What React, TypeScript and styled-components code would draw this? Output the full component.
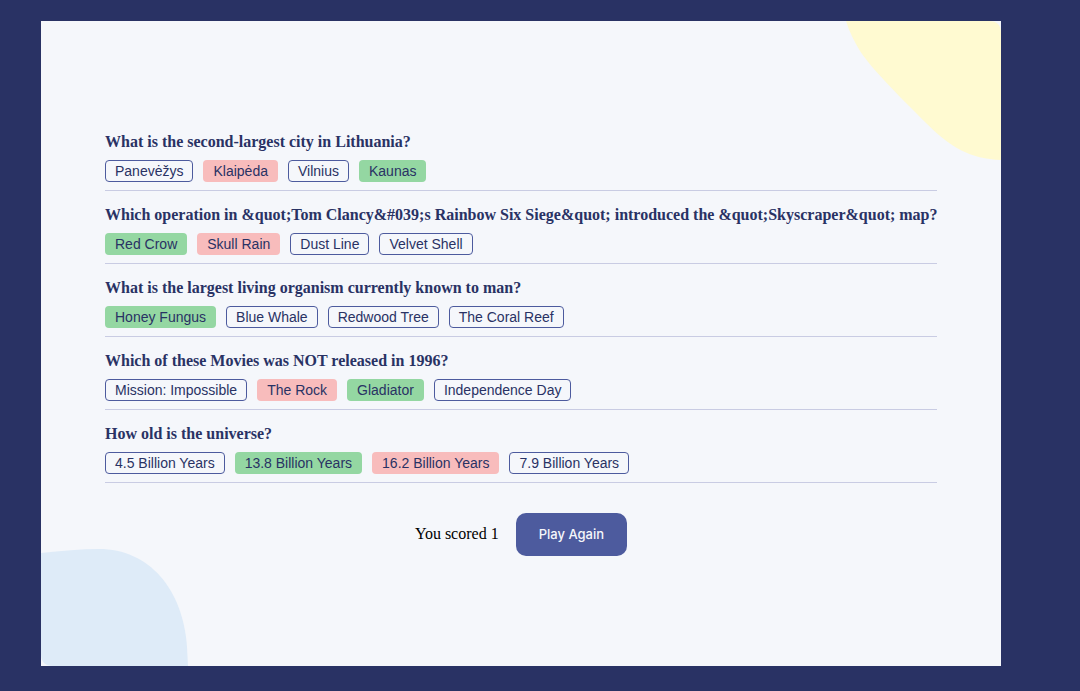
import styled, { createGlobalStyle } from "styled-components"

const GlobalStyle = createGlobalStyle`
    body {
        margin: 0;
        background: #293264;
    }
`

const Card = styled.main`
    position: relative;
    overflow: hidden;
    width: 960px;
    height: 645px;
    margin: 21px 0 0 41px;
    background: #F5F7FB;
    display: flex;
    align-items: center;
    justify-content: center;
`

const BlobTop = styled.svg`
    position: absolute;
    top: 0;
    right: 0;
`

const BlobBottom = styled.svg`
    position: absolute;
    bottom: 0;
    left: 0;
`

const Quiz = styled.section`
    position: relative;
    width: 832px;
    display: flex;
    flex-direction: column;
    gap: 14px;
`

const Question = styled.div`
    padding-bottom: 8px;
    border-bottom: 1px solid #C9CCE3;
    h3 {
        margin: 0 0 9px;
        font-family: "Liberation Serif", "Times New Roman", serif;
        font-size: 16px;
        line-height: 19px;
        font-weight: 700;
        color: #293264;
        white-space: nowrap;
    }
`

const Answers = styled.div`
    display: flex;
    gap: 10px;
`

type Status = "correct" | "wrong" | "idle"

const Answer = styled.span<{ $status: Status }>`
    font-family: "Liberation Sans", Arial, sans-serif;
    font-size: 14px;
    line-height: 16px;
    padding: 2px 9px;
    border-radius: 4px;
    color: #293264;
    border: 1px solid ${p => p.$status === "idle" ? "#4D5B9E" : "transparent"};
    background: ${p => p.$status === "correct" ? "#94D7A2" : p.$status === "wrong" ? "#F8BCBC" : "transparent"};
`

const Footer = styled.div`
    display: flex;
    align-items: center;
    justify-content: center;
    gap: 17px;
    margin-top: 16px;
    span {
        font-family: "Liberation Serif", "Times New Roman", serif;
        font-size: 16px;
        color: #000;
    }
`

const PlayButton = styled.button`
    height: 43px;
    padding: 0 23px;
    border: none;
    border-radius: 10px;
    background: #4D5B9E;
    color: #F5F7FB;
    font-family: Inter, "Liberation Sans", sans-serif;
    font-size: 13px;
    font-weight: 500;
`

const questions: { q: string; a: [string, Status][] }[] = [
    {
        q: "What is the second-largest city in Lithuania?",
        a: [["Panevėžys", "idle"], ["Klaipėda", "wrong"], ["Vilnius", "idle"], ["Kaunas", "correct"]],
    },
    {
        q: "Which operation in &quot;Tom Clancy&#039;s Rainbow Six Siege&quot; introduced the &quot;Skyscraper&quot; map?",
        a: [["Red Crow", "correct"], ["Skull Rain", "wrong"], ["Dust Line", "idle"], ["Velvet Shell", "idle"]],
    },
    {
        q: "What is the largest living organism currently known to man?",
        a: [["Honey Fungus", "correct"], ["Blue Whale", "idle"], ["Redwood Tree", "idle"], ["The Coral Reef", "idle"]],
    },
    {
        q: "Which of these Movies was NOT released in 1996?",
        a: [["Mission: Impossible", "idle"], ["The Rock", "wrong"], ["Gladiator", "correct"], ["Independence Day", "idle"]],
    },
    {
        q: "How old is the universe?",
        a: [["4.5 Billion Years", "idle"], ["13.8 Billion Years", "correct"], ["16.2 Billion Years", "wrong"], ["7.9 Billion Years", "idle"]],
    },
]

export default function App() {
    return (
        <>
            <GlobalStyle />
            <Card>
                <BlobTop width="155" height="139" viewBox="0 0 155 139">
                    <path d="M0 0 L143 0 Q155 0 155 12 L155 139 C124 138 104 126 80 102 C50 72 26 48 14 30 C8 20 3 10 0 0 Z" fill="#FFFAD1" />
                </BlobTop>
                <BlobBottom width="148" height="117" viewBox="0 0 148 117">
                    <path d="M0 4 C20 2 40 0 58 0 C108 0 142 40 146 98 L147 117 L12 117 Q0 117 0 105 Z" fill="#DEEBF8" />
                </BlobBottom>
                <Quiz>
                    {questions.map(item => (
                        <Question key={item.q}>
                            <h3>{item.q}</h3>
                            <Answers>
                                {item.a.map(([text, status]) => (
                                    <Answer key={text} $status={status}>{text}</Answer>
                                ))}
                            </Answers>
                        </Question>
                    ))}
                    <Footer>
                        <span>You scored 1</span>
                        <PlayButton>Play Again</PlayButton>
                    </Footer>
                </Quiz>
            </Card>
        </>
    )
}
